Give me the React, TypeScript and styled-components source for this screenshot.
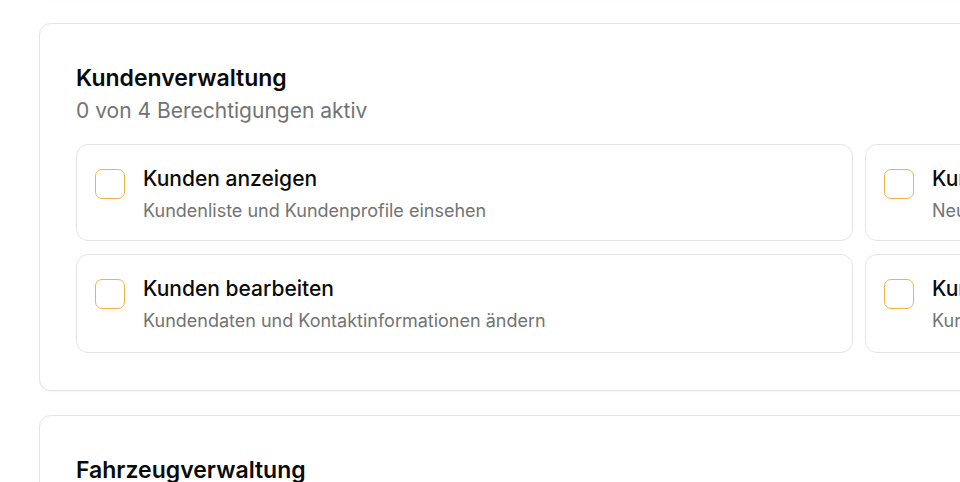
import styled, { createGlobalStyle } from "styled-components";

const GlobalStyle = createGlobalStyle`
    html, body {
        margin: 0;
        padding: 0;
        background: #ffffff;
        overflow: hidden;
    }
    body {
        font-family: Inter, "Noto Sans", sans-serif;
        color: #0a0a0a;
    }
`

const Page = styled.main`
    display: flex;
    flex-direction: column;
    gap: 24px;
    padding-left: 39px;
    margin-top: -177px;
    width: 1640px;
`

const Card = styled.section<{ $stub?: boolean }>`
    box-sizing: border-box;
    width: 1640px;
    background: #ffffff;
    border: 1px solid #e5e5e5;
    border-radius: 12px;
    box-shadow: 0 1px 2px rgba(0, 0, 0, 0.05);
    padding: 36px 36px 37px;
    height: ${(p) => (p.$stub ? "176px" : "auto")};
`

const Title = styled.h2`
    margin: 1px 0 0;
    font-size: 23px;
    line-height: 34px;
    font-weight: 600;
    color: #0a0a0a;
`

const Subtitle = styled.p`
    margin: 2px 0 0;
    font-size: 21px;
    line-height: 28px;
    color: #737373;
`

const Grid = styled.div`
    display: grid;
    grid-template-columns: repeat(2, 777px);
    grid-template-rows: 97px 99px;
    column-gap: 12px;
    row-gap: 13px;
    margin-top: 19px;
`

const Item = styled.label`
    box-sizing: border-box;
    display: flex;
    align-items: flex-start;
    gap: 18px;
    padding: 22px 18px 17px;
    border: 1px solid #e5e5e5;
    border-radius: 12px;
    cursor: pointer;
`

const Box = styled.span`
    box-sizing: border-box;
    flex: none;
    width: 30px;
    height: 30px;
    margin-top: 2px;
    border: 1.5px solid #f2b244;
    border-radius: 7px;
    background: #ffffff;
`

const Texts = styled.div`
    display: flex;
    flex-direction: column;
    gap: 8px;
    min-width: 0;
`

const ItemTitle = styled.span`
    font-size: 21px;
    line-height: 24px;
    font-weight: 500;
    color: #0a0a0a;
    white-space: nowrap;
`

const ItemDesc = styled.span`
    font-size: 18px;
    line-height: 24px;
    color: #737373;
    white-space: nowrap;
`

type Permission = { title: string; desc: string };

const customer: Permission[] = [
    { title: "Kunden anzeigen", desc: "Kundenliste und Kundenprofile einsehen" },
    { title: "Kunden erstellen", desc: "Neue Kunden anlegen" },
    { title: "Kunden bearbeiten", desc: "Kundendaten und Kontaktinformationen ändern" },
    { title: "Kunden löschen", desc: "Kunden aus dem System entfernen" },
];

const vehicles: Permission[] = [
    { title: "Fahrzeuge anzeigen", desc: "Fahrzeugliste und Details einsehen" },
    { title: "Fahrzeuge erstellen", desc: "Neue Fahrzeuge anlegen" },
];

function Section({ title, items }: { title: string; items: Permission[] }) {
    return (
        <Card>
            <Title>{title}</Title>
            <Subtitle>0 von {items.length} Berechtigungen aktiv</Subtitle>
            <Grid>
                {items.map((it) => (
                    <Item key={it.title}>
                        <Box role="checkbox" aria-checked="false" />
                        <Texts>
                            <ItemTitle>{it.title}</ItemTitle>
                            <ItemDesc>{it.desc}</ItemDesc>
                        </Texts>
                    </Item>
                ))}
            </Grid>
        </Card>
    );
}

export default function App() {
    return (
        <>
            <GlobalStyle />
            <Page>
                <Card $stub />
                <Section title="Kundenverwaltung" items={customer} />
                <Section title="Fahrzeugverwaltung" items={vehicles} />
            </Page>
        </>
    );
}
